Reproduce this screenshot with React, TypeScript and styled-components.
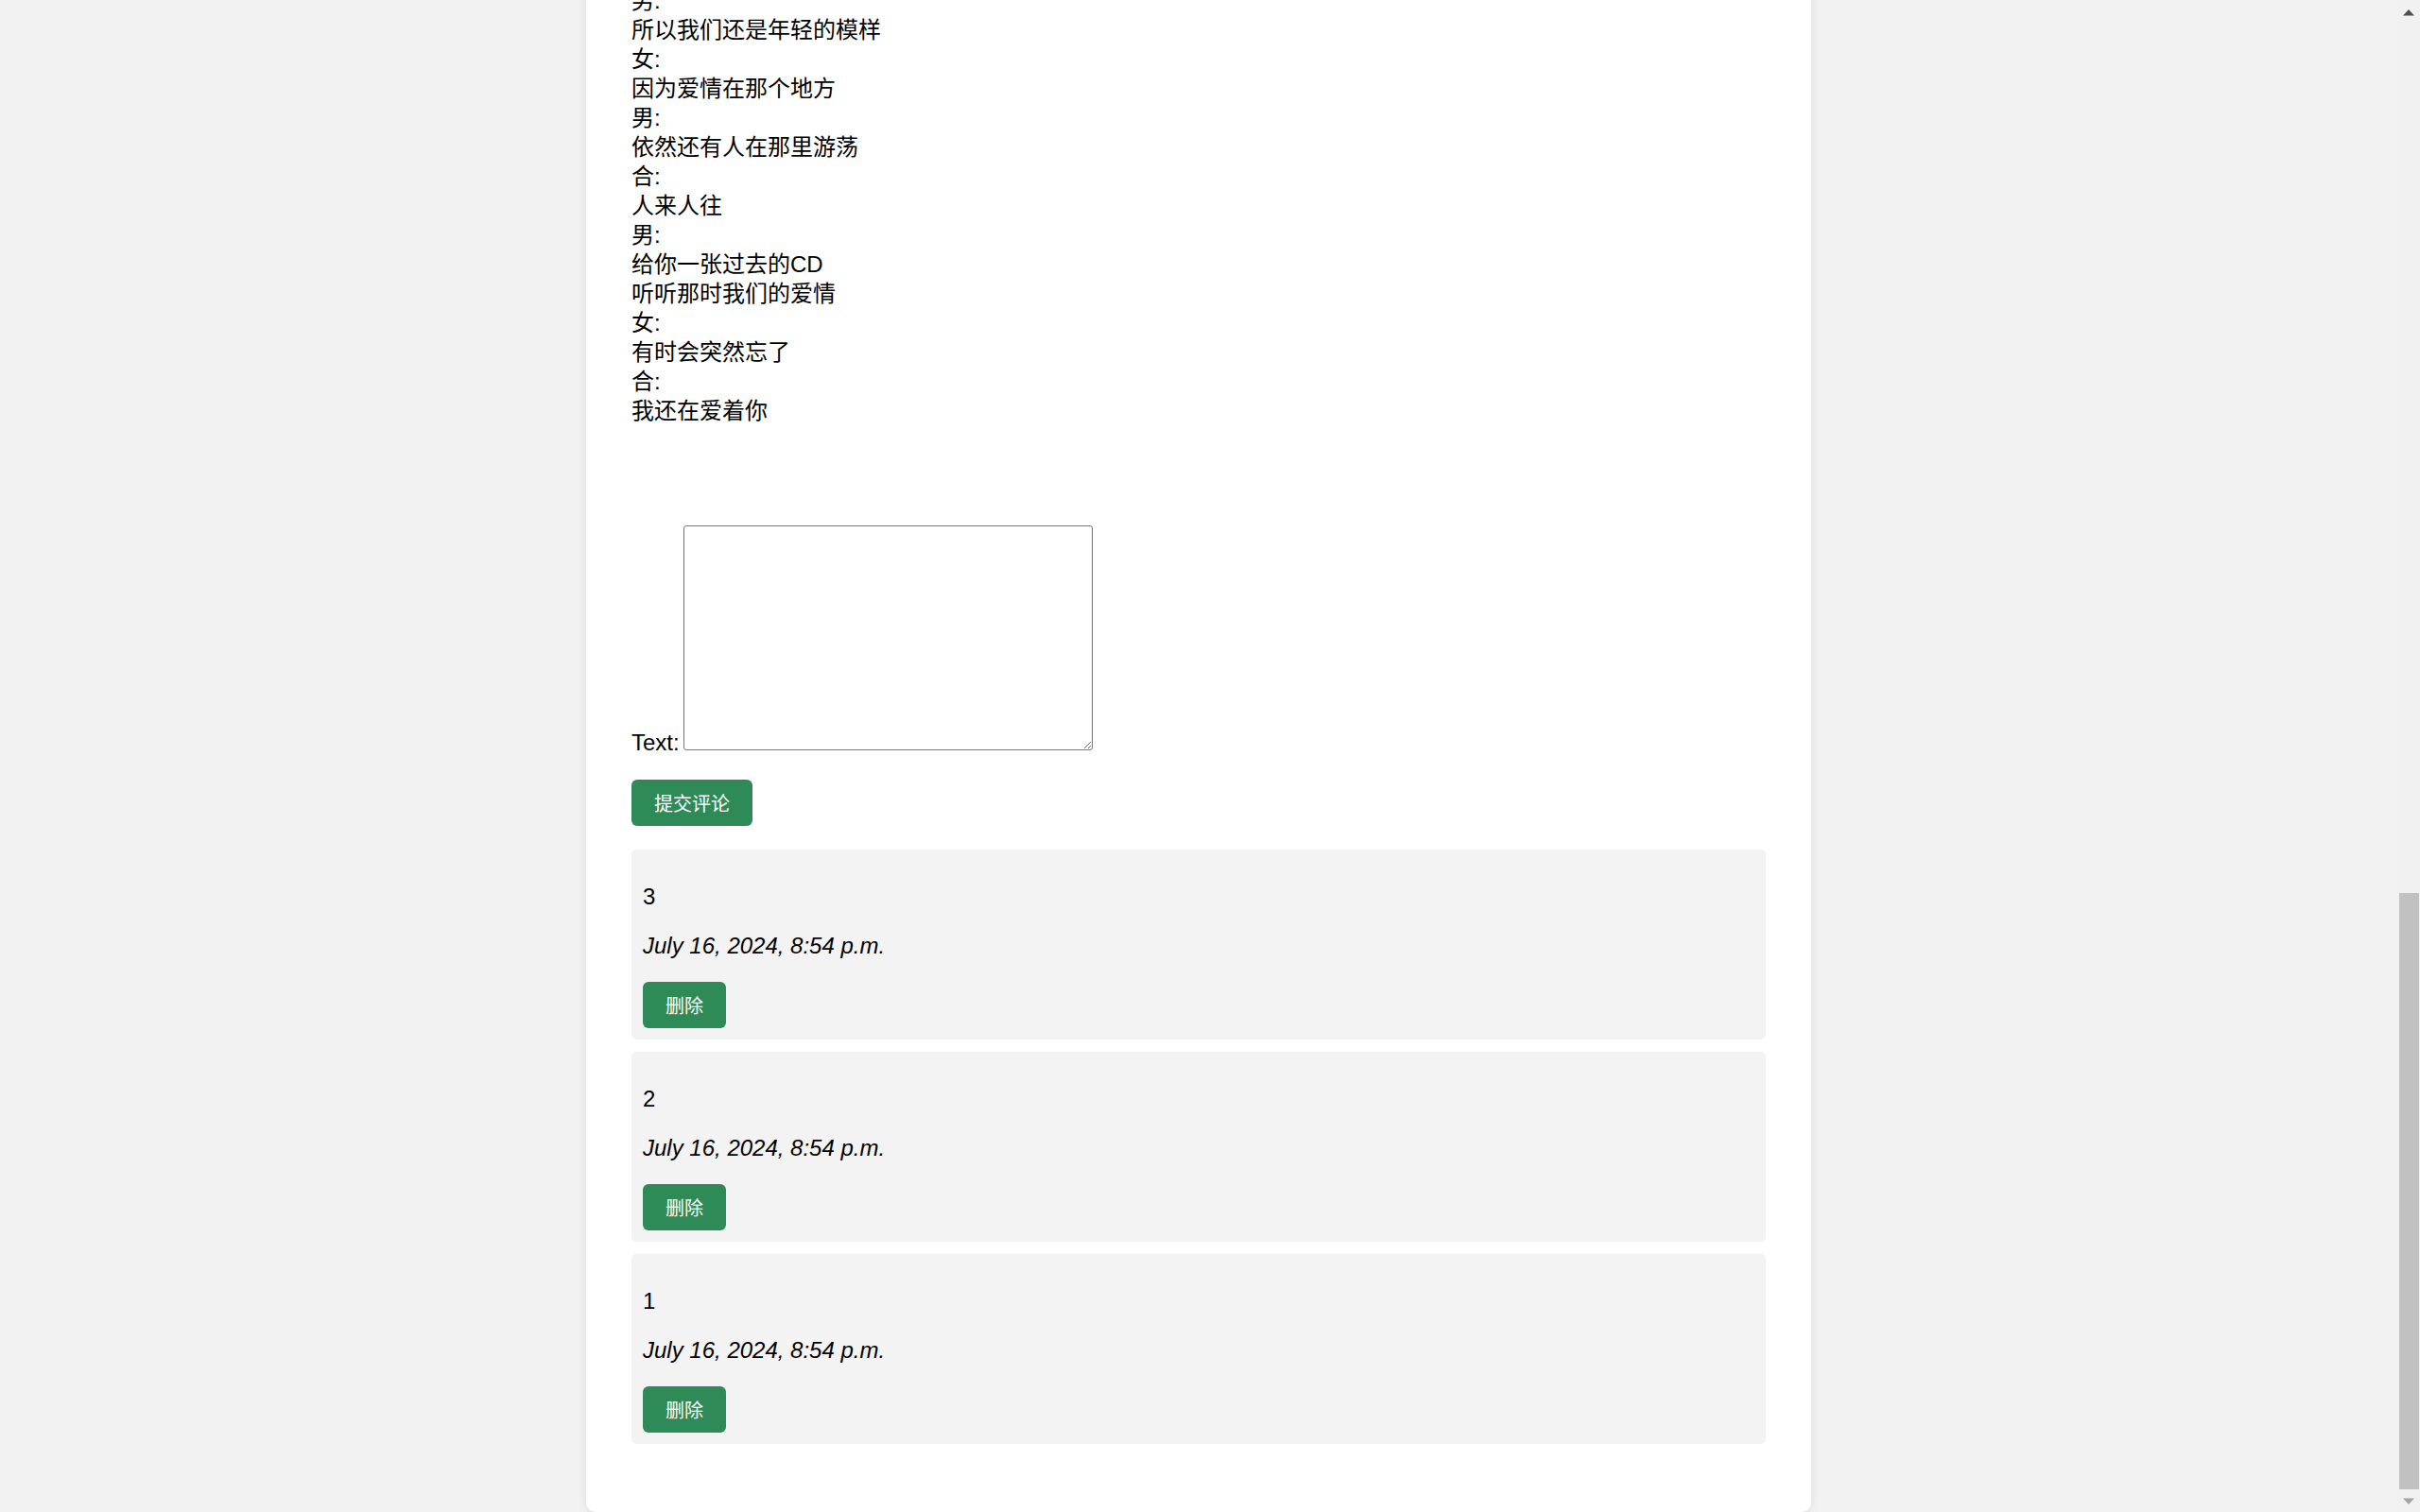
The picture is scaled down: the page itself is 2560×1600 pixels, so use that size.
import React, {useLayoutEffect, useEffect, useState} from 'react';
import styled, {createGlobalStyle} from 'styled-components';

interface Comment {
  id: number;
  text: string;
  created: string;
}

const LYRICS: string[] = [
  '男:',
  '给你一张过去的CD',
  '听听那时我们的爱情',
  '有时会突然忘了',
  '我还在爱着你',
  '女:',
  '再唱不出那样的歌曲',
  '听到都会红着脸躲避',
  '虽然会常常忘了',
  '我依然爱着你',
  '男:',
  '因为爱情不会轻易悲伤',
  '女:',
  '所以一切都是幸福的模样',
  '男:',
  '因为爱情简单的生长',
  '女:',
  '依然随时可以为你疯狂',
  '男:',
  '因为爱情怎么会有沧桑',
  '女:',
  '所以我们还是年轻的模样',
  '男:',
  '因为爱情在那个地方',
  '女:',
  '依然还有人在那里游荡',
  '合:',
  '人来人往',
  '合:',
  '再唱不出那样的歌曲',
  '听到都会红着脸躲避',
  '虽然会常常忘了',
  '我依然爱着你',
  '男:',
  '因为爱情不会轻易悲伤',
  '女:',
  '所以一切都是幸福的模样',
  '男:',
  '因为爱情简单的生长',
  '女:',
  '依然随时可以为你疯狂',
  '男:',
  '因为爱情怎么会有沧桑',
  '女:',
  '所以我们还是年轻的模样',
  '男:',
  '因为爱情在那个地方',
  '女:',
  '依然还有人在那里游荡',
  '合:',
  '人来人往',
  '男:',
  '因为爱情不会轻易悲伤',
  '女:',
  '所以一切都是幸福的模样',
  '男:',
  '因为爱情简单的生长',
  '女:',
  '依然随时可以为你疯狂',
  '女:',
  '因为爱情怎么会有沧桑',
  '男:',
  '所以我们还是年轻的模样',
  '女:',
  '因为爱情在那个地方',
  '男:',
  '依然还有人在那里游荡',
  '合:',
  '人来人往',
  '男:',
  '给你一张过去的CD',
  '听听那时我们的爱情',
  '女:',
  '有时会突然忘了',
  '合:',
  '我还在爱着你',
];

const COMMENTS: Comment[] = [
  {id: 3, text: '3', created: 'July 16, 2024, 8:54 p.m.'},
  {id: 2, text: '2', created: 'July 16, 2024, 8:54 p.m.'},
  {id: 1, text: '1', created: 'July 16, 2024, 8:54 p.m.'},
];

const ARROW = 24;

const scrollToEnd = () => {
  window.scrollTo(0, document.documentElement.scrollHeight);
};

// headless browser hides the native scrollbar, so draw the one from the screenshot
function ScrollRail() {
  const [thumb, setThumb] = useState({top: ARROW, height: 0});

  useEffect(() => {
    const update = () => {
      const doc = document.documentElement;
      const track = window.innerHeight - ARROW * 2;
      const ratio = window.innerHeight / doc.scrollHeight;
      setThumb({
        top: ARROW + (window.scrollY / doc.scrollHeight) * track,
        height: track * ratio,
      });
    };
    update();
    const t = setTimeout(update, 60);
    window.addEventListener('scroll', update);
    window.addEventListener('resize', update);
    return () => {
      clearTimeout(t);
      window.removeEventListener('scroll', update);
      window.removeEventListener('resize', update);
    };
  }, []);

  return (
    <Rail>
      <RailButton>
        <svg width="12" height="7" viewBox="0 0 12 7">
          <polygon points="6,0 12,6.5 0,6.5" fill="#505050" />
        </svg>
      </RailButton>
      <Thumb style={{top: thumb.top, height: thumb.height}} />
      <RailButton $end>
        <svg width="12" height="7" viewBox="0 0 12 7">
          <polygon points="0,0.5 12,0.5 6,7" fill="#a3a3a3" />
        </svg>
      </RailButton>
    </Rail>
  );
}

function App() {
  useLayoutEffect(scrollToEnd, []);
  useEffect(() => {
    const t = setTimeout(scrollToEnd, 50);
    requestAnimationFrame(scrollToEnd);
    return () => clearTimeout(t);
  }, []);

  return (
    <>
      <GlobalStyle />
      <Page>
        <Card>
          <Title>因为爱情</Title>
          <Meta>
            演唱：陈奕迅 / 王菲
            <br />
            作词：小柯
            <br />
            作曲：小柯
            <br />
            专辑：Stranger Under My Skin
            <br />
            发行时间：2011
          </Meta>
          <SectionTitle>歌词</SectionTitle>
          <Lyrics>
            {LYRICS.map((line, i) => (
              <LyricLine key={i}>{line}</LyricLine>
            ))}
          </Lyrics>

          <form onSubmit={(e) => e.preventDefault()}>
            <FieldRow>
              <Label htmlFor="id_text">Text:</Label>
              <TextArea id="id_text" name="text" />
            </FieldRow>
            <GreenButton type="submit">提交评论</GreenButton>
          </form>

          <CommentList>
            {COMMENTS.map((c) => (
              <CommentBox key={c.id}>
                <CommentText>{c.text}</CommentText>
                <CommentDate>{c.created}</CommentDate>
                <GreenButton type="button">删除</GreenButton>
              </CommentBox>
            ))}
          </CommentList>
        </Card>
      </Page>
      <ScrollRail />
    </>
  );
}

export default App;

const GlobalStyle = createGlobalStyle`
  html {
    background: #f2f2f2;
  }
  body {
    margin: 0;
    font-family: "Liberation Sans", Arial, "Noto Sans CJK SC", sans-serif;
    font-size: 24px;
    color: #000;
  }
`;

const Page = styled.div`
  padding-top: 20px;
  margin-right: ${ARROW}px;
`;

const Card = styled.div`
  box-sizing: border-box;
  max-width: 1296px;
  margin: 0 auto;
  padding: 48px 48px 59px;
  background: #fff;
  border-radius: 10px;
  box-shadow: 0 0 10px rgba(0, 0, 0, 0.1);
`;

const Title = styled.h1`
  margin: 0 0 24px;
  font-size: 40px;
  line-height: 48px;
`;

const Meta = styled.p`
  margin: 0 0 48px;
  line-height: 31px;
  color: #555;
`;

const SectionTitle = styled.h2`
  margin: 0 0 48px;
  font-size: 28px;
  line-height: 36px;
`;

const Lyrics = styled.div`
  margin-bottom: 106px;
`;

const LyricLine = styled.div`
  line-height: 31px;
`;

const FieldRow = styled.p`
  margin: 0 0 24.8px;
  line-height: 28px;
`;

const Label = styled.label`
  font-size: 24px;
`;

const TextArea = styled.textarea`
  box-sizing: border-box;
  width: 433px;
  height: 238px;
  margin: 0 0 0 4px;
  padding: 2px;
  border: 1px solid #767676;
  border-radius: 3px;
  font-family: "Liberation Mono", monospace;
  font-size: 20px;
  vertical-align: baseline;
`;

const GreenButton = styled.button`
  display: block;
  height: 49px;
  padding: 0 24px;
  border: none;
  border-radius: 6px;
  background: #2e8b57;
  color: #fff;
  font-family: "Liberation Sans", Arial, "Noto Sans CJK SC", sans-serif;
  font-size: 20px;
  cursor: pointer;
`;

const CommentList = styled.div`
  margin-top: 25px;
`;

const CommentBox = styled.div`
  padding: 12px;
  margin-bottom: 12.3px;
  background: #f3f3f3;
  border-radius: 5px;
`;

const CommentText = styled.p`
  margin: 24px 0;
  line-height: 28.35px;
`;

const CommentDate = styled(CommentText)`
  font-style: italic;
`;

const Rail = styled.div`
  position: fixed;
  top: 0;
  right: 0;
  width: ${ARROW}px;
  height: 100vh;
  display: flex;
  flex-direction: column;
  justify-content: space-between;
  background: #f1f1f1;
`;

const RailButton = styled.div<{$end?: boolean}>`
  display: flex;
  align-items: center;
  justify-content: center;
  height: ${ARROW}px;
  padding-top: ${(p) => (p.$end ? '0' : '1px')};
`;

const Thumb = styled.div`
  position: absolute;
  left: 2px;
  right: 1px;
  background: #c1c1c1;
`;
